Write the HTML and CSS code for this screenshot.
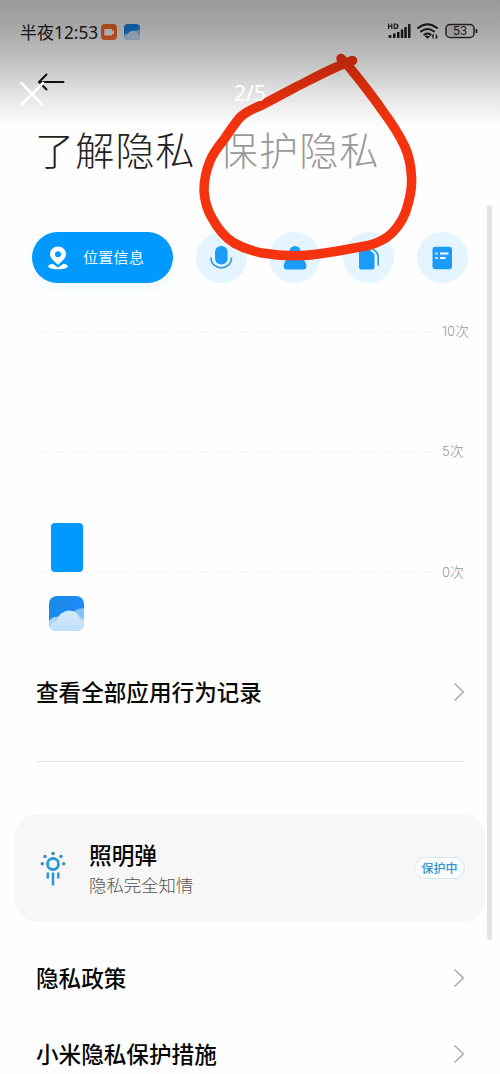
FILE: index.html
```
<!DOCTYPE html>
<html lang="zh-CN">
<head>
<meta charset="utf-8">
<title>隐私</title>
<link rel="stylesheet" href="styles.css">
</head>
<body>
<main class="screen">
  <header class="status">
    <span class="clock">半夜<span class="digits">12:53</span></span>
    <svg class="mini rec" viewBox="0 0 16 16"><rect width="16" height="16" rx="4" fill="#ff6b2c"/><rect x="3.200" y="5" width="8" height="6.500" rx="1" fill="#fff"/><path d="M10.500 8l2.500-2.200v5L10.500 9z" fill="#fff"/></svg>
    <svg class="mini" viewBox="0 0 35 35"><use href="#weather"/></svg>
    <svg class="signals" width="92" height="22" viewBox="0 0 92 22">
      <g fill="#222"><path d="M1 2.5h1.2v2h2v-2h1.2v5.4H4.200v-2.200h-2v2.200H1zM6.700 2.500h2.100q2.700 0 2.700 2.700t-2.700 2.700H6.700zM7.900 3.600v3.200h.9q1.300 0 1.300-1.600t-1.300-1.600z"/>
      <rect x="1.500" y="14" width="3" height="3" rx="1"/><rect x="6" y="12.500" width="2.500" height="4.500"/><rect x="10" y="11" width="2.500" height="6"/><rect x="13.800" y="8.500" width="2.500" height="8.500"/><rect x="17.300" y="6" width="2.500" height="11" rx=".5"/><rect x="21" y="3" width="2.500" height="14" rx=".5"/></g>
      <g fill="none" stroke="#222" stroke-width="2" stroke-linecap="round"><path d="M31 7Q40.500-.5 50 7M34 10.500q6.500-5 13 0M37.300 13.600q3.200-2.200 6.400 0"/></g>
      <path d="M38 15h5l-2.500 2.500zM45 15.500l1.300-2.500v5M49 13v5l1.500-2.500" fill="#222" stroke="#222" stroke-width=".6"/>
      <rect x="59" y="3.500" width="28" height="13" rx="4" fill="none" stroke="#2c2c2c" stroke-width="1.500"/><rect x="60.500" y="5" width="14" height="10" rx="2" fill="#000" opacity=".1"/><path d="M89.500 8v4" stroke="#222" stroke-width="1.700"/>
      <text class="battery" x="73" y="14.400" text-anchor="middle">53</text>
    </svg>
  </header>

  <nav class="back"><svg width="28" height="20" viewBox="0 0 28 20"><path d="M9.500 2.500L2 10l7.500 7.500M2 10h24.500" fill="none" stroke="#111" stroke-width="2" stroke-linecap="round"/></svg></nav>

  <div class="tabs"><span class="tab">了解隐私</span><span class="tab muted">保护隐私</span></div>

  <div class="chips">
    <div class="chip active">
      <svg width="22" height="24" viewBox="0 0 22 24"><path fill="#fff" fill-rule="evenodd" d="M11 .5c-4.500 0-8 3.300-8 7.600C3 13 8 15.500 11 19c3-3.500 8-6 8-10.900C19 3.800 15.500.5 11 .5zm0 4.800a3 3 0 1 1 0 6 3 3 0 0 1 0-6z"/><path d="M5.500 17.800C0 19 .2 21.500 3.500 22.200c4 1.300 11 1.300 15 0 3.300-.8 3.500-3.200-2-4.400L11 21.500z" fill="#fff"/></svg>
      <span>位置信息</span>
    </div>
    <div class="chip round"><svg width="24" height="26" viewBox="0 0 24 26"><rect x="6" y="1" width="12.600" height="18.500" rx="6" fill="#1a9cf8"/><path d="M2 12.500c0 13.700 20.500 13.700 20.500 0" fill="none" stroke="#389bd6" stroke-width="1.700"/></svg></div>
    <div class="chip round"><svg width="24" height="26" viewBox="0 0 24 26"><circle cx="12" cy="6.500" r="5.500" fill="#1a9cf8"/><path d="M5 14h14c5 2 6 10.500 1.500 10.500h-17C-1 24.500 0 16 5 14z" fill="#1a9cf8"/></svg></div>
    <div class="chip round"><svg width="24" height="26" viewBox="0 0 24 26"><path d="M4 4h8l5.500 5.500V22q0 2.500-2.500 2.500H4.500Q2 24.500 2 22V6q0-2 2-2z" fill="#1a9cf8"/><path d="M14 3.500q7.200 3 7.200 8.500v8.500" fill="none" stroke="#389bd6" stroke-width="1.700"/></svg></div>
    <div class="chip round"><svg width="24" height="26" viewBox="0 0 24 26"><rect x="2.500" y="1.800" width="19.500" height="22.500" rx="3" fill="#1a9cf8"/><path d="M5.500 8.500h2M10 8.500h8.500M5.500 13h2M10 13h5.500" stroke="#fff" stroke-width="2"/></svg></div>
  </div>

  <section class="chart">
    <div class="grid"><i></i><span><span class="num">10</span>次</span></div>
    <div class="grid"><i></i><span><span class="num">5</span>次</span></div>
    <div class="grid"><i></i><span><span class="num">0</span>次</span></div>
    <b class="bar"></b>
  </section>
  <svg class="app" viewBox="0 0 35 35">
    <defs>
      <linearGradient id="sky" x1="0" y1="0" x2="1" y2=".4"><stop offset="0" stop-color="#168be4"/><stop offset="1" stop-color="#2388fb"/></linearGradient>
      <linearGradient id="cloud" x1="0" y1="0" x2="0" y2="1"><stop offset="0" stop-color="#d6eafc"/><stop offset="1" stop-color="#bfdff9"/></linearGradient>
      <clipPath id="tile"><rect width="35" height="35" rx="8"/></clipPath>
    </defs>
    <g id="weather" clip-path="url(#tile)"><rect width="35" height="35" fill="url(#sky)"/><path d="M25 15q5-3 10-3v23H20z" fill="#80c2fa"/><path d="M0 25q4-5 9-4 4-6 11-6.500 8 0 10.500 6.500l4.500 1v13H0z" fill="#a9d6f9"/><path d="M0 35q-1-8 8-10 2-9 12-10 9 0 11 8 4 2 4 6v6z" fill="url(#cloud)"/></g>
  </svg>

  <div class="row records"><span>查看全部应用行为记录</span><svg class="arrow" viewBox="0 0 12 20"><path d="M1.500 1.500L10.300 10l-8.800 8.500"/></svg></div>
  <hr class="divider">

  <section class="card">
    <svg width="28" height="36" viewBox="0 0 28 36"><circle cx="14" cy="14" r="5.500" fill="none" stroke="#2a98da" stroke-width="2.800"/><g fill="#2d8fc9"><circle cx="14" cy="3.500" r="1.800"/><circle cx="6" cy="6.500" r="1.700"/><circle cx="22" cy="6.500" r="1.700"/><circle cx="3.300" cy="13.800" r="1.700"/><circle cx="24.700" cy="13.800" r="1.700"/></g><path d="M8.800 22.500v6M14 22.500v13M19.300 22.500v6" stroke="#2996d8" stroke-width="2.500"/></svg>
    <div class="copy"><h2>照明弹</h2><p>隐私完全知情</p></div>
    <span class="badge">保护中</span>
  </section>

  <div class="row policy"><span>隐私政策</span><svg class="arrow" viewBox="0 0 12 20"><path d="M1.500 1.500L10.300 10l-8.800 8.500"/></svg></div>
  <div class="row measures"><span>小米隐私保护措施</span><svg class="arrow" viewBox="0 0 12 20"><path d="M1.500 1.500L10.300 10l-8.800 8.500"/></svg></div>

  <i class="scrollbar"></i>
  <svg class="scribble" viewBox="0 0 500 300"><path d="M352.500 60.500L346 63C330 69 310 80 295 87.500L262 105C252 109 244 113 239 118.500C233 126 229 132 225 138C219 146 213 153 210 161C205 173 204 181 204 191C205 203 207 210 212 218C218 229 224 237 234 243C243 248 252 251 262 253C277 255.500 289 256 302 255.500C315 255 326 253 338 251L368 245.500C378 243 386 239 392 233C402 223 406 213 408 204C411 194 412 186 411.500 177C411 166 409 156 405 147C399 134 391 122 382 110C376 101 369 92 362 83L346 63L341 58.500"/></svg>
  <div class="viewer">
    <svg width="26" height="26" viewBox="0 0 26 26"><path d="M2.500 2l21 22M24 2L2 24" stroke="#fff" stroke-width="2.700" stroke-linecap="round"/></svg>
    <span class="count">2/5</span>
  </div>
</main>
</body>
</html>
```
FILE: styles.css
```
* { box-sizing: border-box; }
body { margin: 0; background: #fefefe; font-family: "Noto Sans CJK SC", sans-serif; color: #080808; }
svg { display: block; flex: none; }
.screen { position: relative; width: 500px; height: 1074px; overflow: hidden; background: #fefefe; }
.status { display: flex; align-items: center; height: 63px; padding: 0 20px; }
.clock { width: 81px; font-size: 17px; font-weight: 400; white-space: nowrap; color: #222; }
.digits { font-family: "Noto Sans", sans-serif; font-size: 17.300px; }
.mini { width: 16px; height: 16px; margin-right: 7px; }
.signals { margin-left: auto; margin-right: 1px; }
.battery { font: 400 11.500px Inter, sans-serif; fill: #222; }
.back { height: 38px; padding: 9px 0 0 37px; }
.tabs { display: flex; gap: 23px; height: 98px; padding-left: 35px; line-height: 94px; font-size: 39px; font-weight: 200; letter-spacing: 1.200px; color: #222; }
.muted { color: #999; }
.chips { display: flex; margin-top: 33px; padding-left: 32px; gap: 22.700px; }
.chip { height: 51px; display: flex; align-items: center; border-radius: 26px; }
.active { width: 141px; padding-left: 15px; gap: 14px; background: #0099ff; color: #eefaff; font-size: 15px; letter-spacing: .3px; box-shadow: 0 6px 14px #0099ff10; }
.active span { line-height: 20px; padding-bottom: 1px; }
.round { width: 51px; justify-content: center; background: #e5f5ff; }
.chart { position: relative; display: flex; flex-direction: column; justify-content: space-between; height: 261px; margin: 38px 0 0 36px; }
.grid { display: flex; align-items: center; gap: 10px; height: 20px; font-size: 14px; font-weight: 300; color: #999; }
.grid i { width: 396px; border-top: 1px dashed #f0f0f0; }
.grid > span { line-height: 18px; padding-bottom: 2px; }
.num { font-family: Inter, sans-serif; font-size: 13px; }
.bar { position: absolute; left: 15px; bottom: 10px; width: 32px; height: 49px; border-radius: 4px; background: #0099ff; }
.app { width: 35px; height: 35px; margin: 14px 0 0 49px; }
.row { display: flex; align-items: center; justify-content: space-between; height: 76px; padding: 0 35px 0 36px; font-size: 22.600px; font-weight: 500; }
.row span { padding-bottom: 1px; }
.records { margin-top: 23px; }
.arrow { width: 12px; height: 20px; fill: none; stroke: #aaa; stroke-width: 1.500; }
.divider { height: 1px; margin: 31px 35px 0 36px; border: 0; background: #e4e4e4; }
.card { display: flex; align-items: center; height: 108px; margin: 52px 15px 0; padding: 0 20px 0 24px; border-radius: 22px; background: #f7f7f7; }
.copy { margin-left: 22px; flex: 1; }
.copy h2 { margin: 0; font-size: 22.700px; line-height: 32px; font-weight: 500; }
.copy p { margin: 0; font-size: 17.400px; line-height: 27px; font-weight: 300; color: #555; }
.badge { width: 51px; height: 22px; border: 1px solid #d8e7ef; border-radius: 11px; background: #fafcfd; color: #3494cb; font-size: 12px; font-weight: 500; line-height: 20px; text-align: center; white-space: nowrap; }
.policy { margin-top: 18px; }
.row.policy span { padding-bottom: 2px; }
.scrollbar { position: absolute; left: 487px; top: 205px; width: 5px; height: 735px; border-radius: 3px; background: #e4e4e4; }
.scribble { position: absolute; left: 0; top: 0; width: 500px; height: 300px; fill: none; stroke: #f5330e; stroke-width: 9.500; stroke-linecap: round; stroke-linejoin: round; }
.viewer { position: absolute; left: 0; top: 0; width: 500px; height: 126px; display: flex; align-items: flex-start; padding: 81px 0 0 19px; background: linear-gradient(#0006 0%, #00000055 25%, #0000003d 48%, #0000001c 74%, #00000008 92%, transparent); }
.count { margin-left: 189px; color: #fff; font: 400 21px/25px "Noto Sans", sans-serif; }
```
